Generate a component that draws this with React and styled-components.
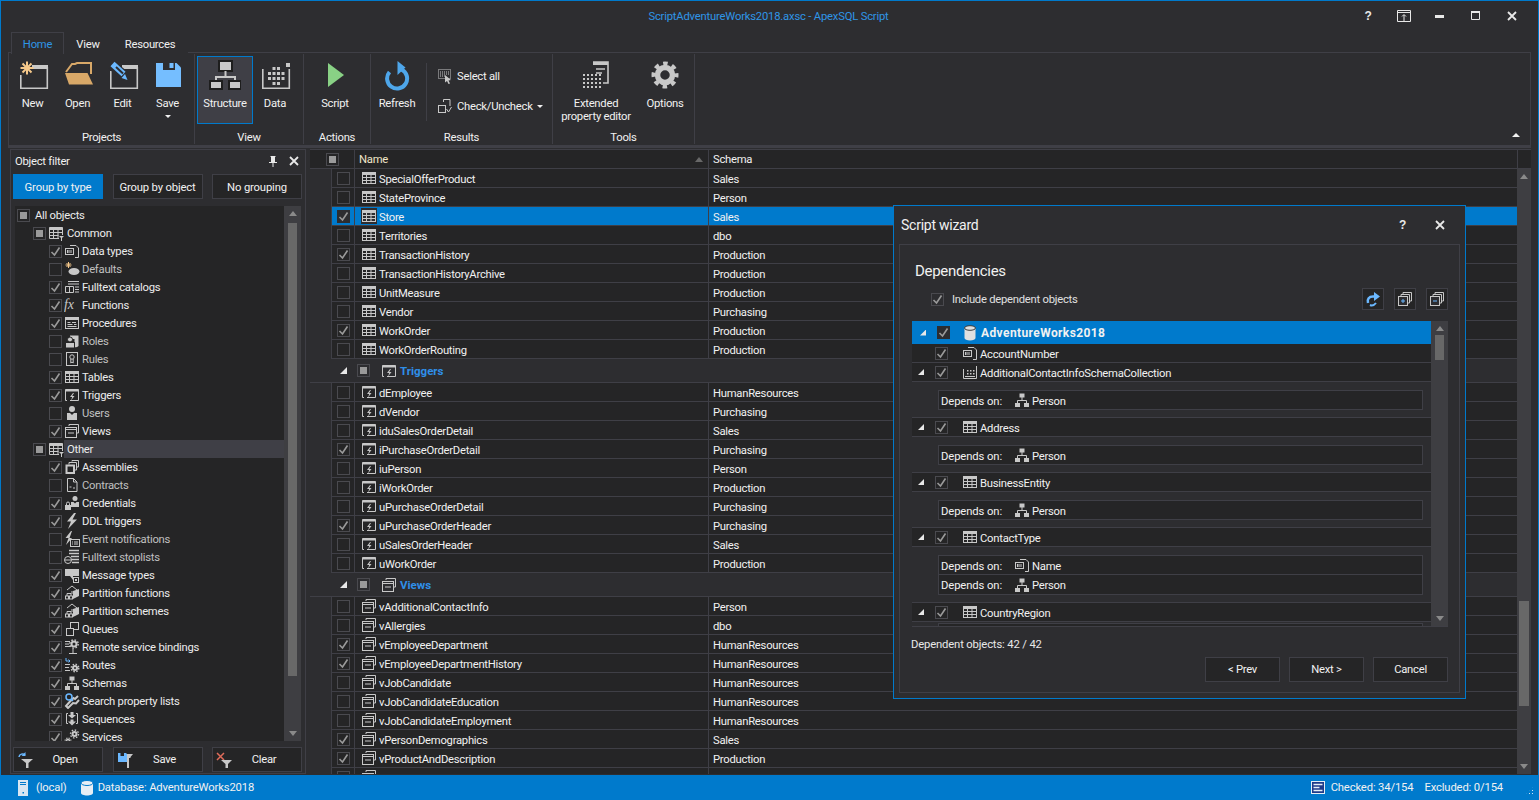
import React from "react";
import styled, { createGlobalStyle } from "styled-components";

const G = "#c8c8c8";
const ORANGE = "#f5c88a";
const BLUE = "#6bb8ff";

// list icons, all drawn on a 16px box
const icons = {
  table: (
    <>
      <rect x="1.5" y="2.5" width="13" height="11" stroke={G} fill="none" />
      <rect x="1.5" y="2.5" width="13" height="2.5" fill={G} />
      <path d="M1.5 7.5h13M1.5 10.5h13M5.5 5v8.5M10 5v8.5" stroke={G} fill="none" />
    </>
  ),
  tableFilter: (
    <>
      <path d="M11 13.5H1.5v-11h13V10" stroke={G} fill="none" />
      <rect x="1.5" y="2.5" width="13" height="2.5" fill={G} />
      <path d="M1.5 7.5h13M1.5 10.5h9M5.5 5v8.5M10 5v8.5" stroke={G} fill="none" />
      <path d="M11 11h5l-2 2v3h-1v-3z" fill={G} />
    </>
  ),
  datatype: (
    <>
      <path d="M6 2.5h6l2.5 2.5v9.5H11" stroke={G} fill="none" />
      <rect x="1.5" y="5.5" width="8" height="6" stroke={G} fill="#252526" />
      <path d="M3.5 7v3M5 7v3M7 7v3" stroke={G} fill="none" />
    </>
  ),
  defaults: (
    <>
      <ellipse cx="10" cy="10.5" rx="5.5" ry="3.5" fill={G} />
      <path d="M4.5 1v6M1.5 4h6M2.5 2l4 4M6.5 2l-4 4" stroke={ORANGE} fill="none" />
    </>
  ),
  fulltext: (
    <>
      <path d="M4 2.5h11M4 5h11M11 8h4M11 10.5h4M11 13h4" stroke={G} fill="none" />
      <path d="M1.5 7.5h8v6h-8zM5.5 7.5v6" stroke={G} fill="none" />
    </>
  ),
  fx: (
    <text x="0" y="12" fontFamily="Liberation Serif, serif" fontStyle="italic" fontSize="14" fill={G}>
      fx
    </text>
  ),
  procedure: (
    <>
      <rect x="1.5" y="2.5" width="13" height="11" stroke={G} fill="none" />
      <rect x="1.5" y="2.5" width="13" height="2.5" fill={G} />
      <path d="M3.5 7.5h3M8 7.5h4M3.5 9.5h5M10 9.5h2.5M3.5 11.5h9" stroke={G} fill="none" />
    </>
  ),
  roles: (
    <>
      <path d="M6 2.5h8.5V13q-2 2-4 1V6H6z" fill={G} />
      <circle cx="6" cy="6.5" r="2.5" fill={G} stroke="#252526" />
      <rect x="1.5" y="9.5" width="9" height="5.5" fill={G} stroke="#252526" />
    </>
  ),
  rules: (
    <>
      <rect x="2.5" y="1.5" width="11" height="13" stroke={G} fill="none" />
      <circle cx="8" cy="6" r="2.2" stroke={G} fill="none" />
      <path d="M6.8 8v4l1.2-1 1.2 1V8" stroke={G} fill="none" />
    </>
  ),
  trigger: (
    <>
      <path d="M1.5 2.5h13v11H6M1.5 2.5v11H3" stroke={G} fill="none" />
      <rect x="1.5" y="2.5" width="13" height="2" fill={G} />
      <path d="M9 6l-3 4h2.2L7 13.5l3.5-4.5H8.2L10 6z" fill={G} />
    </>
  ),
  user: (
    <>
      <circle cx="8" cy="4" r="3" fill={G} />
      <path d="M3 8h3l2 2 2-2h3v7H3z" fill={G} />
    </>
  ),
  views: (
    <>
      <path d="M5 3V1.5h9.5V10H13" stroke={G} fill="none" />
      <rect x="1.5" y="4.5" width="11" height="10" stroke={G} fill="none" />
      <path d="M1.5 6.5h11M4 10h6" stroke={G} fill="none" />
    </>
  ),
  assembly: (
    <>
      <path d="M8 2.5V1.5h6.5V8H13" stroke={G} fill="none" />
      <path d="M5 5.5V3.5h7.5V11H11" stroke={G} fill="none" />
      <rect x="2.5" y="6.5" width="7.5" height="7.5" stroke={G} strokeWidth="2" fill="none" />
    </>
  ),
  contract: (
    <>
      <path d="M3.5 1.5h6l3.5 3.5v9.5H3.5z" stroke={G} fill="none" />
      <path d="M9.5 1.5V5H13M5.5 10h2M9 11h2" stroke={G} fill="none" />
    </>
  ),
  credential: (
    <>
      <circle cx="11" cy="3.5" r="2.5" fill={G} />
      <path d="M7 7h2.5l1.5 1.5L12.5 7H15v5H7z" fill={G} />
      <rect x="1" y="10" width="6" height="5" fill={G} />
      <path d="M2.5 10V8.5a1.5 1.5 0 0 1 3 0V10" stroke={G} fill="none" />
    </>
  ),
  ddl: <path d="M10 0L3 8.5h4L4 16l9-9.5H8.5L12 0z" fill={G} />,
  event: (
    <>
      <path d="M7 0L1.5 7h3L2 14l6-7H5.5L8 0z" fill={G} />
      <rect x="6.5" y="8.5" width="9" height="7" stroke={G} fill="#252526" />
      <path d="M8 11h1M10 11h4M8 13h1M10 13h4" stroke={G} fill="none" />
    </>
  ),
  stoplist: (
    <>
      <path d="M5 1.5h10M5 4.5h10M7 7.5h8M7 10.5h8M8 13.5h7" stroke={G} strokeWidth="1.4" fill="none" />
      <circle cx="4" cy="11" r="3.5" stroke={G} fill="#252526" />
      <path d="M1 11h6" stroke={G} fill="none" />
    </>
  ),
  message: (
    <>
      <path d="M1 2h14v7H9v4L6 9H1z" fill={G} />
      <rect x="9.5" y="10.5" width="5" height="5" stroke={G} fill="#252526" />
      <rect x="11" y="12" width="2" height="2" fill={G} />
    </>
  ),
  partition: (
    <>
      <path d="M3 5l5-4 5 4M8 9v-3" stroke={G} fill="none" />
      <path d="M9 6l6-2v7l-6 3z" fill={G} />
      <rect x="1.5" y="11" width="3" height="3" stroke={G} fill="none" />
      <rect x="5.5" y="11" width="3" height="3" stroke={G} fill="none" />
      <path d="M3 11V8.5h4V11" stroke={G} fill="none" />
    </>
  ),
  queue: (
    <>
      <rect x="6.5" y="1.5" width="8" height="7" stroke={G} fill="none" />
      <rect x="2.5" y="7.5" width="7" height="7" stroke={G} fill="#252526" />
    </>
  ),
  remote: (
    <>
      <path d="M1 2.5h5M1 5h4M1 7.5h5M9 10v4M5 14.5h8" stroke={G} fill="none" />
      <circle cx="10" cy="5" r="2.5" stroke={G} strokeWidth="2" fill="none" />
      <circle cx="10" cy="5" r="4.2" stroke={G} strokeWidth="1.4" strokeDasharray="1.6 1.7" fill="none" />
    </>
  ),
  route: (
    <>
      <path d="M2 1v3h4M4.5 2.5L6 4 4.5 5.5" stroke={BLUE} fill="none" />
      <path d="M1 7.5h5M1 10.5h4M1 13.5h5" stroke={G} fill="none" />
      <circle cx="11" cy="11" r="2" stroke={G} strokeWidth="2" fill="none" />
      <circle cx="11" cy="11" r="3.8" stroke={G} strokeWidth="1.4" strokeDasharray="1.5 1.5" fill="none" />
    </>
  ),
  schema: (
    <>
      <rect x="5.5" y="1.5" width="5" height="4" fill={G} />
      <rect x="1" y="11" width="5" height="4" fill={G} />
      <rect x="10" y="11" width="5" height="4" fill={G} />
      <path d="M8 5v3.5M3.5 11V8.5h9V11" stroke={G} fill="none" />
    </>
  ),
  search: (
    <>
      <path d="M14 3l-3 3-1.5-1L6 8.5 2 13l2 2 5-5 3 .5 3-3.5" stroke={G} strokeWidth="2" fill="none" />
      <circle cx="5" cy="4" r="3" stroke={BLUE} strokeWidth="1.5" fill="none" />
      <path d="M7 6l2 2" stroke={BLUE} strokeWidth="1.5" />
    </>
  ),
  sequence: (
    <>
      <path d="M4 2.5H2.5v10H4M12 2.5h1.5v10H12" stroke={G} fill="none" />
      <path d="M6.5 1h3v3H12L8 7.5 4 4h2.5zM6.5 8.5h3v2H12l-4 4-4-4h2.5z" fill={G} />
    </>
  ),
  service: (
    <>
      <circle cx="10.5" cy="5" r="2" stroke={G} strokeWidth="2" fill="none" />
      <circle cx="10.5" cy="5" r="4" stroke={G} strokeWidth="1.4" strokeDasharray="1.5 1.6" fill="none" />
      <circle cx="4" cy="12" r="1.5" stroke={G} strokeWidth="1.5" fill="none" />
      <circle cx="4" cy="12" r="3" stroke={G} strokeWidth="1.2" strokeDasharray="1.2 1.2" fill="none" />
    </>
  ),
  database: (
    <>
      <path d="M2.5 3v10c0 1.5 2.5 2.5 5.5 2.5s5.500-1 5.500-2.500V3z" fill="#e0e0e0" />
      <ellipse cx="8" cy="3" rx="5.5" ry="2.3" fill="#e0e0e0" stroke="#3a3a3a" />
    </>
  ),
  xsd: (
    <>
      <path d="M1.5 5v9.5h13V2" stroke={G} fill="none" />
      <path d="M5 6h1.500v1.500H5zM8 6h1.500v1.500H8zM11 6h1.500v1.500H11zM5 9h1.500v1.500H5zM8 9h1.500v1.500H8zM11 9h1.500v1.500H11zM3 12h10v1H3z" fill={G} />
    </>
  ),
  selectAll: (
    <>
      <path d="M1.5 1.5h12v9h-12z" stroke={G} strokeDasharray="1 1" fill="none" />
      <path d="M3 4h9M3 6h9M3 8h5" stroke={G} strokeDasharray="1 1" fill="none" />
      <path d="M8 7l6 5-2.5.5L13 15.5l-1.5.5-1.5-3-2 1.5z" fill={G} />
    </>
  ),
  checkToggle: (
    <>
      <path d="M6.5 4V1.5H13V8" stroke={G} fill="none" />
      <rect x="1.5" y="7.5" width="7" height="7" stroke={G} fill="none" />
      <path d="M9.5 11l2 3 3-5" stroke={G} fill="none" />
    </>
  ),
  openFilter: (
    <>
      <path d="M2 5a3.5 3.5 0 0 1 6-2" stroke={BLUE} strokeWidth="1.5" fill="none" />
      <path d="M8.5 0v4h-4z" fill={BLUE} />
      <path d="M4 7h12l-4.5 4v5h-2.5v-5z" fill={G} />
    </>
  ),
  saveFilter: (
    <>
      <path d="M1 1h8l1 1v8H1z" fill={BLUE} />
      <rect x="3.5" y="1" width="3.5" height="3" fill="#252526" />
      <path d="M10 2h6l-2.5 3v1H12v10h-2z" fill={G} />
    </>
  ),
  clearFilter: (
    <>
      <path d="M1 1l7 7M8 1L1 8" stroke="#e06c5a" strokeWidth="1.5" />
      <path d="M5 8h11l-4 4v4H9.5v-4z" fill={G} />
    </>
  ),
  refreshSmall: (
    <>
      <path d="M3 12c-1-4 1-6.5 5-6.5h3" stroke={BLUE} strokeWidth="2.5" fill="none" />
      <path d="M9 1l6 4.5L9 10z" fill={BLUE} />
      <path d="M5 14c2 1 4 .5 6-2" stroke={BLUE} strokeWidth="2" fill="none" />
    </>
  ),
  expandAll: (
    <>
      <path d="M6 3V1.5h8.5V10H13M4 5V3.5h8.5V12H11" stroke={G} fill="none" />
      <rect x="1.5" y="5.5" width="9" height="9" stroke={G} fill="#2d2d30" />
      <path d="M4 10h4M6 8v4" stroke={BLUE} />
    </>
  ),
  collapseAll: (
    <>
      <path d="M6 3V1.5h8.5V10H13M4 5V3.5h8.5V12H11" stroke={G} fill="none" />
      <rect x="1.5" y="5.5" width="9" height="9" stroke={G} fill="#2d2d30" />
      <path d="M4 10h4" stroke={BLUE} />
    </>
  ),
  server: (
    <>
      <rect x="3" y="0" width="10" height="16" fill="#d8e6f2" />
      <path d="M5 2.5h6M5 4.5h6" stroke="#007acc" />
      <rect x="7.5" y="12" width="1.5" height="1.5" fill="#007acc" />
    </>
  ),
  dbStatus: (
    <>
      <path d="M2 3v10c0 1.5 2.7 2.5 6 2.5s6-1 6-2.5V3z" fill="#e6eef5" />
      <ellipse cx="8" cy="3" rx="6" ry="2.5" fill="#e6eef5" stroke="#007acc" />
    </>
  ),
  report: (
    <>
      <rect x="0.5" y="1.5" width="13" height="12" fill="#1e3a8a" stroke="#e6eef5" />
      <path d="M2.5 4.5h9M2.5 7.5h6M2.5 10.5h9" stroke="#e6eef5" strokeWidth="1.5" />
    </>
  ),
};

// ribbon icons, drawn on a 32px box
const ribbonIcons = {
  new: (
    <>
      <rect x="15" y="6" width="16" height="4" fill={G} />
      <path d="M3.8 16v13.2h26.5V8" stroke={G} strokeWidth="1.6" fill="none" />
      <path d="M10 2.5v13M3.5 9h13M5.5 4.5l9 9M14.5 4.5l-9 9" stroke={ORANGE} strokeWidth="2" />
    </>
  ),
  open: (
    <>
      <path d="M4 13L10 5h3l2-1h14v11" stroke="#d8a868" strokeWidth="2" fill="none" />
      <path d="M3 14h22.5L31 25.5H7z" fill="#d8a868" />
    </>
  ),
  edit: (
    <>
      <rect x="15" y="6" width="16" height="4" fill={G} />
      <path d="M3.8 12v17.2h26.5V8" stroke={G} strokeWidth="1.6" fill="none" />
      <path d="M5 6l14 12" stroke="#2d2d30" strokeWidth="10" />
      <path d="M5.5 5l11 10" stroke={BLUE} strokeWidth="6" />
      <path d="M9 8l7 6.5" stroke="#2d2d30" strokeWidth="2" />
      <path d="M14.5 19l6 2-2.5-6z" fill={BLUE} />
    </>
  ),
  save: (
    <>
      <path d="M4 4h20.5L29 8.5V28H4z" fill="#75beff" />
      <path d="M11 4h12v7H11z" fill="#2d2d30" />
      <rect x="17.5" y="4" width="4" height="5" fill="#75beff" />
    </>
  ),
  structure: (
    <>
      <rect x="10" y="2" width="13" height="10" fill={G} stroke="#1e1e1e" strokeWidth="2" />
      <path d="M16.5 12v7M7 24v-6h19v6" stroke={G} strokeWidth="2" fill="none" />
      <rect x="1" y="22" width="12" height="8" fill={G} stroke="#1e1e1e" strokeWidth="2" />
      <rect x="20" y="22" width="12" height="8" fill={G} stroke="#1e1e1e" strokeWidth="2" />
    </>
  ),
  data: (
    <>
      <path d="M3.8 10v19.2h26.5V10" stroke={G} strokeWidth="1.6" fill="none" />
      <rect x="27" y="4" width="4" height="4" fill={G} />
      <path d="M13.5 8h3v3h-3zM18 8h3v3h-3zM9 13h3v3H9zM13.5 13h3v3h-3zM18 13h3v3h-3zM22.5 13h3v3h-3zM9 18h3v3H9zM13.5 18h3v3h-3zM18 18h3v3h-3zM22.5 18h3v3h-3zM13.5 23h3v3h-3zM18 23h3v3h-3z" fill={G} />
    </>
  ),
  script: <path d="M9 4l16 12L9 28z" fill="#89d185" />,
  refresh: (
    <>
      <path d="M20.5 10.500a10 10 0 1 1-12 2.500" stroke="#4ea6ea" strokeWidth="4" fill="none" />
      <path d="M16.5 2l8 6.5-8 7.5z" fill="#4ea6ea" />
    </>
  ),
  extended: (
    <>
      <path d="M13 3h15v21h-5" stroke={G} strokeWidth="1.6" fill="none" />
      <rect x="13" y="3" width="15" height="3" fill={G} />
      <path d="M16 10h9M16 14h6" stroke={G} strokeWidth="1.6" />
      <path d="M3 16h20M3 20h20M3 24h20M3 28h20" stroke={G} strokeWidth="2" strokeDasharray="2 2" />
    </>
  ),
  options: (
    <>
      <circle cx="16" cy="16" r="11.5" stroke={G} strokeWidth="4" strokeDasharray="4.5 4.53" strokeDashoffset="2.2" fill="none" />
      <circle cx="16" cy="16" r="7.5" stroke={G} strokeWidth="5.5" fill="none" />
    </>
  ),
};

const Icon = ({ name, size = 16 }) => (
  <IconSvg width={size} height={size} viewBox="0 0 16 16">
    {icons[name]}
  </IconSvg>
);

const RibbonIcon = ({ name }) => (
  <IconSvg width="32" height="32" viewBox="0 0 32 32">
    {ribbonIcons[name]}
  </IconSvg>
);

const Check = ({ state, dark }) => (
  <CheckBox $dark={dark}>
    {state === "on" && (
      <svg width="11" height="11" viewBox="0 0 11 11">
        <path d="M1.5 6l3 3 5-7.5" stroke="#9a9a9a" strokeWidth="1.6" fill="none" />
      </svg>
    )}
    {state === "mixed" && <Mixed />}
  </CheckBox>
);

const filterCommon = [
  ["Data types", "datatype", 1],
  ["Defaults", "defaults", 0],
  ["Fulltext catalogs", "fulltext", 1],
  ["Functions", "fx", 1],
  ["Procedures", "procedure", 1],
  ["Roles", "roles", 0],
  ["Rules", "rules", 0],
  ["Tables", "table", 1],
  ["Triggers", "trigger", 1],
  ["Users", "user", 0],
  ["Views", "views", 1],
];

const filterOther = [
  ["Assemblies", "assembly", 1],
  ["Contracts", "contract", 0],
  ["Credentials", "credential", 1],
  ["DDL triggers", "ddl", 1],
  ["Event notifications", "event", 0],
  ["Fulltext stoplists", "stoplist", 0],
  ["Message types", "message", 1],
  ["Partition functions", "partition", 1],
  ["Partition schemes", "partition", 1],
  ["Queues", "queue", 1],
  ["Remote service bindings", "remote", 1],
  ["Routes", "route", 1],
  ["Schemas", "schema", 1],
  ["Search property lists", "search", 1],
  ["Sequences", "sequence", 1],
  ["Services", "service", 1],
];

const tableRows = [
  ["SpecialOfferProduct", "Sales", 0],
  ["StateProvince", "Person", 0],
  ["Store", "Sales", 1, true],
  ["Territories", "dbo", 0],
  ["TransactionHistory", "Production", 1],
  ["TransactionHistoryArchive", "Production", 0],
  ["UnitMeasure", "Production", 0],
  ["Vendor", "Purchasing", 0],
  ["WorkOrder", "Production", 1],
  ["WorkOrderRouting", "Production", 0],
];

const triggerRows = [
  ["dEmployee", "HumanResources", 0],
  ["dVendor", "Purchasing", 0],
  ["iduSalesOrderDetail", "Sales", 0],
  ["iPurchaseOrderDetail", "Purchasing", 1],
  ["iuPerson", "Person", 0],
  ["iWorkOrder", "Production", 0],
  ["uPurchaseOrderDetail", "Purchasing", 0],
  ["uPurchaseOrderHeader", "Purchasing", 1],
  ["uSalesOrderHeader", "Sales", 0],
  ["uWorkOrder", "Production", 0],
];

const viewRows = [
  ["vAdditionalContactInfo", "Person", 0],
  ["vAllergies", "dbo", 0],
  ["vEmployeeDepartment", "HumanResources", 1],
  ["vEmployeeDepartmentHistory", "HumanResources", 1],
  ["vJobCandidate", "HumanResources", 0],
  ["vJobCandidateEducation", "HumanResources", 0],
  ["vJobCandidateEmployment", "HumanResources", 0],
  ["vPersonDemographics", "Sales", 1],
  ["vProductAndDescription", "Production", 1],
  ["vProductModelCatalogDescription", "Production", 0],
];

const dependencies = [
  { name: "AccountNumber", icon: "datatype" },
  { name: "AdditionalContactInfoSchemaCollection", icon: "xsd", open: true, on: [["schema", "Person"]] },
  { name: "Address", icon: "table", open: true, on: [["schema", "Person"]] },
  { name: "BusinessEntity", icon: "table", open: true, on: [["schema", "Person"]] },
  { name: "ContactType", icon: "table", open: true, on: [["datatype", "Name"], ["schema", "Person"]] },
  { name: "CountryRegion", icon: "table", open: true, tight: true, on: [["schema", "Person"]] },
];

function GridRows({ rows, icon }) {
  return rows.map(([name, schema, checked, selected]) => (
    <DataRow key={name}>
      <Gutter />
      <CheckCell $selected={selected}>
        <Check state={checked ? "on" : "off"} dark={selected} />
      </CheckCell>
      <NameCell $selected={selected}>
        <NameIcon $selected={selected}>
          <Icon name={icon} />
        </NameIcon>
        <CellText>{name}</CellText>
      </NameCell>
      <SchemaCell $selected={selected}>
        <CellText>{schema}</CellText>
      </SchemaCell>
    </DataRow>
  ));
}

function GroupHeader({ title, icon }) {
  return (
    <GroupRow>
      <Expander />
      <Check state="mixed" />
      <GroupIcon>
        <Icon name={icon} />
      </GroupIcon>
      <GroupTitle>{title}</GroupTitle>
    </GroupRow>
  );
}

function FilterItems({ items }) {
  return items.map(([label, icon, checked]) => (
    <TreeRow key={label} $indent={34}>
      <Check state={checked ? "on" : "off"} />
      <Icon name={icon} />
      <TreeLabel $dim={!checked}>{label}</TreeLabel>
    </TreeRow>
  ));
}

function RibbonGroup({ label, children, $width, $pad }) {
  return (
    <GroupBox $width={$width}>
      <GroupItems $pad={$pad}>{children}</GroupItems>
      <GroupLabel>{label}</GroupLabel>
    </GroupBox>
  );
}

export default function App() {
  return (
    <>
      <GlobalStyle />
      <Window>
        <TitleBar>
          <AppTitle>ScriptAdventureWorks2018.axsc - ApexSQL Script</AppTitle>
          <WindowControls>
            <WinButton>
              <HelpMark>?</HelpMark>
            </WinButton>
            <WinButton>
              <svg width="14" height="12" viewBox="0 0 14 12">
                <path d="M.5.5h13v11H.5zM.5 2.5h13M7 11V5M5 6.5L7 4.5l2 2" stroke="#e8e8e8" fill="none" />
              </svg>
            </WinButton>
            <WinButton>
              <svg width="10" height="4" viewBox="0 0 10 4">
                <rect width="9" height="3" y="1" fill="#e8e8e8" />
              </svg>
            </WinButton>
            <WinButton>
              <svg width="10" height="10" viewBox="0 0 10 10">
                <path d="M.5.5h8v8h-8z" stroke="#e8e8e8" fill="none" />
                <rect width="9" height="2" fill="#e8e8e8" />
              </svg>
            </WinButton>
            <WinButton>
              <svg width="10" height="10" viewBox="0 0 10 10">
                <path d="M1 1l8 8M9 1l-8 8" stroke="#e8e8e8" strokeWidth="1.8" />
              </svg>
            </WinButton>
          </WindowControls>
        </TitleBar>

        <Tabs>
          <Tab $active>Home</Tab>
          <Tab>View</Tab>
          <Tab $wide>Resources</Tab>
        </Tabs>

        <Ribbon>
          <RibbonGroup $width={186} label="Projects">
            <RibbonButton $width={45}>
              <RibbonIcon name="new" />
              New
            </RibbonButton>
            <RibbonButton $width={45}>
              <RibbonIcon name="open" />
              Open
            </RibbonButton>
            <RibbonButton $width={45}>
              <RibbonIcon name="edit" />
              Edit
            </RibbonButton>
            <RibbonButton $width={45}>
              <RibbonIcon name="save" />
              Save
              <Caret />
            </RibbonButton>
          </RibbonGroup>
          <RibbonGroup $width={109} $pad={2} label="View">
            <RibbonButton $width={56} $active>
              <RibbonIcon name="structure" />
              Structure
            </RibbonButton>
            <RibbonButton $width={44}>
              <RibbonIcon name="data" />
              Data
            </RibbonButton>
          </RibbonGroup>
          <RibbonGroup $width={67} $pad={11} label="Actions">
            <RibbonButton $width={40}>
              <RibbonIcon name="script" />
              Script
            </RibbonButton>
          </RibbonGroup>
          <RibbonGroup $width={182} $pad={7} label="Results">
            <RibbonButton $width={38}>
              <RibbonIcon name="refresh" />
              Refresh
            </RibbonButton>
            <InnerDivider />
            <SmallStack>
              <SmallButton>
                <Icon name="selectAll" />
                Select all
              </SmallButton>
              <SmallButton>
                <Icon name="checkToggle" />
                Check/Uncheck
                <InlineCaret />
              </SmallButton>
            </SmallStack>
          </RibbonGroup>
          <RibbonGroup $width={142} $pad={5} label="Tools">
            <RibbonButton $width={76}>
              <RibbonIcon name="extended" />
              Extended
              <br />
              property editor
            </RibbonButton>
            <RibbonButton $width={40} $gapLeft={11}>
              <RibbonIcon name="options" />
              Options
            </RibbonButton>
          </RibbonGroup>
          <CollapseRibbon />
        </Ribbon>

        <Body>
          <FilterPanel>
            <PanelHead>
              Object filter
              <PanelTools>
                <svg width="10" height="11" viewBox="0 0 10 11">
                  <path d="M2.5 0h5v1h-.5v5H9v1H5.5v4h-1V7H1V6h2V1h-.5z" fill="#e8e8e8" />
                </svg>
                <svg width="10" height="10" viewBox="0 0 10 10">
                  <path d="M1 1l8 8M9 1l-8 8" stroke="#e8e8e8" strokeWidth="1.8" />
                </svg>
              </PanelTools>
            </PanelHead>
            <ButtonRow>
              <FilterButton $active>Group by type</FilterButton>
              <FilterButton>Group by object</FilterButton>
              <FilterButton>No grouping</FilterButton>
            </ButtonRow>
            <TreeBox>
              <TreeRows>
                <TreeRow $indent={2}>
                  <Check state="mixed" />
                  <TreeLabel $root>All objects</TreeLabel>
                </TreeRow>
                <TreeRow $indent={18}>
                  <Check state="mixed" />
                  <Icon name="tableFilter" />
                  <TreeLabel $branch>Common</TreeLabel>
                </TreeRow>
                <FilterItems items={filterCommon} />
                <TreeRow $indent={18}>
                  <Check state="mixed" />
                  <Icon name="tableFilter" />
                  <TreeLabel $branch $hover>
                    Other
                  </TreeLabel>
                </TreeRow>
                <FilterItems items={filterOther} />
              </TreeRows>
              <ScrollTrack $width={17}>
                <ScrollArrow />
                <ScrollThumb $top={7} $height={453} $width={9} />
                <ScrollArrow $down />
              </ScrollTrack>
            </TreeBox>
            <ButtonRow $bottom>
              <FooterButton>
                <Icon name="openFilter" />
                <span>Open</span>
              </FooterButton>
              <FooterButton>
                <Icon name="saveFilter" />
                <span>Save</span>
              </FooterButton>
              <FooterButton>
                <Icon name="clearFilter" />
                <span>Clear</span>
              </FooterButton>
            </ButtonRow>
          </FilterPanel>

          <GridPanel>
            <GridHead>
              <HeadCheck>
                <Check state="mixed" />
              </HeadCheck>
              <HeadName>
                Name
                <SortMark />
              </HeadName>
              <HeadSchema>Schema</HeadSchema>
              <HeadCorner />
            </GridHead>
            <GridMain>
              <GridBody>
                <GridRows rows={tableRows} icon="table" />
                <GroupHeader title="Triggers" icon="trigger" />
                <GridRows rows={triggerRows} icon="trigger" />
                <GroupHeader title="Views" icon="views" />
                <GridRows rows={viewRows} icon="views" />
              </GridBody>
              <ScrollTrack $width={14}>
                <ScrollArrow />
                <ScrollThumb $top={422} $height={105} $width={10} />
                <ScrollArrow $down />
              </ScrollTrack>
            </GridMain>
          </GridPanel>
        </Body>

        <StatusBar>
          <Icon name="server" />
          <StatusText $gap={5}>(local)</StatusText>
          <StatusItem>
            <Icon name="dbStatus" />
            <StatusText $gap={3}>Database: AdventureWorks2018</StatusText>
          </StatusItem>
          <StatusRight>
            <Icon name="report" />
            <StatusText $gap={4}>Checked: 34/154</StatusText>
            <StatusText $gap={11}>Excluded: 0/154</StatusText>
            <Grip />
          </StatusRight>
        </StatusBar>

        <Dialog>
          <DialogHead>
            <DialogTitle>Script wizard</DialogTitle>
            <DialogTools>
              <HelpMark>?</HelpMark>
              <svg width="10" height="10" viewBox="0 0 10 10">
                <path d="M1 1l8 8M9 1l-8 8" stroke="#e8e8e8" strokeWidth="1.8" />
              </svg>
            </DialogTools>
          </DialogHead>
          <DialogBody>
            <Heading>Dependencies</Heading>
            <IncludeRow>
              <Check state="on" />
              <IncludeLabel>Include dependent objects</IncludeLabel>
              <ToolGroup>
                <ToolButton>
                  <Icon name="refreshSmall" />
                </ToolButton>
                <ToolButton>
                  <Icon name="expandAll" />
                </ToolButton>
                <ToolButton>
                  <Icon name="collapseAll" />
                </ToolButton>
              </ToolGroup>
            </IncludeRow>
            <DepList>
              <DepRows>
                <DepRoot>
                  <DepExpander />
                  <Check state="on" dark />
                  <DepRootIcon>
                    <Icon name="database" />
                  </DepRootIcon>
                  AdventureWorks2018
                </DepRoot>
                {dependencies.map((dep) => (
                  <React.Fragment key={dep.name}>
                    <DepRow>
                      <DepExpander $hidden={!dep.open} />
                      <Check state="on" />
                      <DepIcon>
                        <Icon name={dep.icon} />
                      </DepIcon>
                      <CellText>{dep.name}</CellText>
                    </DepRow>
                    {dep.on && (
                      <DepDetail $tight={dep.tight}>
                        {dep.on.map(([icon, target]) => (
                          <DependsLine key={target}>
                            <DependsLabel>Depends on:</DependsLabel>
                            <Icon name={icon} />
                            <DependsTarget>{target}</DependsTarget>
                          </DependsLine>
                        ))}
                      </DepDetail>
                    )}
                  </React.Fragment>
                ))}
              </DepRows>
              <ScrollTrack $width={17}>
                <ScrollArrow />
                <ScrollThumb $top={4} $height={25} $width={9} />
                <ScrollArrow $down />
              </ScrollTrack>
            </DepList>
            <DepCount>Dependent objects: 42 / 42</DepCount>
            <WizardButtons>
              <WizardButton>&lt; Prev</WizardButton>
              <WizardButton>Next &gt;</WizardButton>
              <WizardButton>Cancel</WizardButton>
            </WizardButtons>
          </DialogBody>
        </Dialog>
      </Window>
    </>
  );
}

const GlobalStyle = createGlobalStyle`
  html, body {
    margin: 0;
    height: 800px;
    overflow: hidden;
    background: #2d2d30;
  }
  * {
    box-sizing: border-box;
  }
  body {
    font-family: Roboto, "Liberation Sans", sans-serif;
    font-size: 11.25px;
    letter-spacing: -0.25px;
    color: #f1f1f1;
  }
`;

const IconSvg = styled.svg`
  flex: none;
  display: block;
`;

const Window = styled.div`
  position: relative;
  display: flex;
  flex-direction: column;
  width: 1539px;
  height: 800px;
  border: 1px solid #007acc;
  border-bottom: 0;
  background: #2d2d30;
`;

const TitleBar = styled.header`
  position: relative;
  display: flex;
  align-items: center;
  justify-content: center;
  flex: none;
  height: 31px;
`;

const AppTitle = styled.div`
  color: #2f95e6;
  margin-left: -2px;
  letter-spacing: -0.2px;
`;

const WindowControls = styled.div`
  position: absolute;
  right: 8px;
  top: 0;
  display: flex;
  height: 30px;
`;

const WinButton = styled.div`
  display: flex;
  align-items: center;
  justify-content: center;
  width: 36px;
`;

const HelpMark = styled.span`
  font-family: "Liberation Sans", sans-serif;
  font-weight: 700;
  font-size: 12px;
  color: #e8e8e8;
`;

const Tabs = styled.nav`
  display: flex;
  flex: none;
  height: 21px;
  padding-left: 10px;
  margin-bottom: -1px;
  position: relative;
  z-index: 1;
`;

const Tab = styled.div`
  display: flex;
  align-items: center;
  justify-content: center;
  width: ${(p) => (p.$active ? "53px" : p.$wide ? "76px" : "48px")};
  height: 22px;
  padding-top: 1px;
  border: 1px solid ${(p) => (p.$active ? "#3f3f46" : "transparent")};
  border-bottom: 0;
  background: #2d2d30;
  color: ${(p) => (p.$active ? "#2f95e6" : "#f1f1f1")};
`;

const Ribbon = styled.section`
  position: relative;
  display: flex;
  flex: none;
  height: 96px;
  margin: 0 7px;
  border: 1px solid #3f3f46;
  border-bottom-width: 3px;
`;

const GroupBox = styled.div`
  display: flex;
  flex-direction: column;
  flex: none;
  width: ${(p) => p.$width}px;
  margin: 1px 0;
  border-right: 1px solid #3f3f46;
`;

const GroupItems = styled.div`
  display: flex;
  flex: 1;
  padding: 2px 0 0 ${(p) => p.$pad ?? 1}px;
`;

const GroupLabel = styled.div`
  flex: none;
  height: 18px;
  line-height: 24px;
  text-align: center;
`;

const RibbonButton = styled.div`
  display: flex;
  flex-direction: column;
  align-items: center;
  flex: none;
  width: ${(p) => p.$width}px;
  height: 68px;
  margin-left: ${(p) => p.$gapLeft ?? 0}px;
  padding-top: 2px;
  line-height: 13px;
  text-align: center;
  white-space: nowrap;
  border: 1px solid ${(p) => (p.$active ? "#007acc" : "transparent")};
  background: ${(p) => (p.$active ? "#3f3f46" : "transparent")};

  svg {
    margin-bottom: 6px;
  }
`;

const Caret = styled.span`
  width: 0;
  height: 0;
  margin-top: 5px;
  border: 3px solid transparent;
  border-top: 3.5px solid #f1f1f1;
  border-bottom: 0;
`;

const InlineCaret = styled(Caret)`
  margin: 1px 0 0 0;
`;

const InnerDivider = styled.div`
  flex: none;
  width: 1px;
  height: 58px;
  margin: 7px 10px 0 10px;
  background: #3f3f46;
`;

const SmallStack = styled.div`
  display: flex;
  flex-direction: column;
  gap: 14px;
  padding-top: 12px;
`;

const SmallButton = styled.div`
  display: flex;
  align-items: center;
  gap: 4px;
  height: 16px;
  white-space: nowrap;
`;

const CollapseRibbon = styled.span`
  position: absolute;
  right: 10px;
  bottom: 8px;
  width: 0;
  height: 0;
  border: 4.5px solid transparent;
  border-bottom: 4.5px solid #f1f1f1;
  border-top: 0;
`;

const Body = styled.main`
  display: flex;
  flex: 1;
  min-height: 0;
  gap: 4px;
  padding: 1px 7px 1px 9px;
  background: #2d2d30;
`;

const FilterPanel = styled.aside`
  display: flex;
  flex-direction: column;
  flex: none;
  width: 296px;
  padding: 0 3px;
  border: 1px solid #3f3f46;
`;

const PanelHead = styled.div`
  display: flex;
  align-items: center;
  justify-content: space-between;
  flex: none;
  height: 22px;
  padding: 0 0 0 1px;
`;

const PanelTools = styled.div`
  display: flex;
  align-items: center;
  gap: 11px;
  padding-right: 3px;
`;

const ButtonRow = styled.div`
  display: flex;
  justify-content: space-between;
  flex: none;
  margin-top: ${(p) => (p.$bottom ? "6px" : "2px")};
  margin-bottom: ${(p) => (p.$bottom ? "1px" : "7px")};
  margin-left: -1px;
`;

const FilterButton = styled.div`
  display: flex;
  align-items: center;
  justify-content: center;
  width: 90px;
  height: 25px;
  padding-top: 2px;
  letter-spacing: -0.15px;
  border: 1px solid ${(p) => (p.$active ? "#007acc" : "#3f3f46")};
  background: ${(p) => (p.$active ? "#007acc" : "#252526")};
`;

const FooterButton = styled.div`
  display: flex;
  align-items: center;
  width: 90px;
  height: 25px;
  padding-left: 3px;
  border: 1px solid #3f3f46;
  background: #252526;

  span {
    flex: 1;
    text-align: center;
    padding-right: 14px;
    padding-left: 9px;
  }
`;

const TreeBox = styled.div`
  display: flex;
  flex: 1;
  min-height: 0;
  margin: 0 1px;
  background: #252526;
`;

const TreeRows = styled.div`
  flex: 1;
  min-width: 0;
  overflow: hidden;
`;

const TreeRow = styled.div`
  display: flex;
  align-items: center;
  height: 18px;
  padding-left: ${(p) => p.$indent}px;

  > svg {
    margin-left: 2px;
  }
`;

const TreeLabel = styled.span`
  display: flex;
  align-items: center;
  flex: 1;
  height: 18px;
  padding-left: ${(p) => (p.$root ? 5 : p.$branch ? 3 : 2)}px;
  color: ${(p) => (p.$dim ? "#c0c0c0" : "#ececec")};
  background: ${(p) => (p.$hover ? "#3f3f46" : "transparent")};
  white-space: nowrap;
`;

const CheckBox = styled.span`
  display: inline-flex;
  align-items: center;
  justify-content: center;
  flex: none;
  width: 13px;
  height: 13px;
  border: 1px solid ${(p) => (p.$dark ? "#2d2d30" : "#4a4a4f")};
  background: ${(p) => (p.$dark ? "#2d2d30" : "transparent")};
`;

const Mixed = styled.span`
  width: 7px;
  height: 7px;
  background: #9a9a9a;
`;

const ScrollTrack = styled.div`
  display: flex;
  flex-direction: column;
  align-items: center;
  flex: none;
  width: ${(p) => p.$width}px;
  background: #3e3e42;
`;

const ScrollArrow = styled.span`
  flex: none;
  width: 0;
  height: 0;
  margin-top: ${(p) => (p.$down ? "auto" : "5px")};
  margin-bottom: ${(p) => (p.$down ? "5px" : "0")};
  border-left: 4.5px solid transparent;
  border-right: 4.5px solid transparent;
  border-top: ${(p) => (p.$down ? "5px solid #8a8a8a" : "0")};
  border-bottom: ${(p) => (p.$down ? "0" : "5px solid #8a8a8a")};
`;

const ScrollThumb = styled.span`
  flex: none;
  width: ${(p) => p.$width}px;
  height: ${(p) => p.$height}px;
  margin-top: ${(p) => p.$top}px;
  background: #686868;
`;

const GridPanel = styled.section`
  display: flex;
  flex-direction: column;
  flex: 1;
  min-width: 0;
`;

const GridHead = styled.div`
  display: flex;
  flex: none;
  height: 20px;
  background: #252526;
  border-top: 1px solid #3f3f46;
  border-bottom: 1px solid #3f3f46;
`;

const HeadCheck = styled.div`
  display: flex;
  align-items: center;
  flex: none;
  width: 45px;
  padding-left: 16px;
  border-right: 1px solid #3f3f46;
`;

const HeadName = styled.div`
  display: flex;
  align-items: center;
  justify-content: space-between;
  flex: none;
  width: 354px;
  padding: 0 5px 0 4px;
  border-right: 1px solid #3f3f46;
  color: #f0e6c8;
`;

const SortMark = styled.span`
  width: 0;
  height: 0;
  border-left: 4.5px solid transparent;
  border-right: 4.5px solid transparent;
  border-bottom: 5px solid #686868;
`;

const HeadSchema = styled.div`
  display: flex;
  align-items: center;
  flex: 1;
  padding: 0 0 0 4px;
`;

const HeadCorner = styled.div`
  flex: none;
  width: 14px;
  border-left: 1px solid #3f3f46;
`;

const GridMain = styled.div`
  display: flex;
  flex: 1;
  min-height: 0;
`;

const GridBody = styled.div`
  flex: 1;
  min-width: 0;
  overflow: hidden;
`;

const DataRow = styled.div`
  display: flex;
  height: 19px;
`;

const Gutter = styled.div`
  flex: none;
  width: 21px;
  background: #2d2d30;
`;

const CheckCell = styled.div`
  display: flex;
  align-items: center;
  flex: none;
  width: 24px;
  padding: 1px 0 0 5px;
  background: ${(p) => (p.$selected ? "#007acc" : "#252526")};
  border-left: 1px solid #3f3f46;
  border-right: 1px solid #3f3f46;
  border-bottom: 1px solid #3f3f46;
`;

const NameCell = styled.div`
  display: flex;
  align-items: center;
  flex: none;
  width: 354px;
  padding: 0 0 0 6px;
  gap: 2px;
  background: ${(p) => (p.$selected ? "#007acc" : "#252526")};
  border-right: 1px solid #3f3f46;
  border-bottom: 1px solid #3f3f46;
  white-space: nowrap;
`;

const CellText = styled.span`
  padding-top: 2px;
`;

const NameIcon = styled.span`
  flex: none;
  background: ${(p) => (p.$selected ? "#2d2d30" : "transparent")};
`;

const SchemaCell = styled.div`
  display: flex;
  align-items: center;
  flex: 1;
  padding: 0 0 0 4px;
  background: ${(p) => (p.$selected ? "#007acc" : "#252526")};
  border-bottom: 1px solid #3f3f46;
`;

const GroupRow = styled.div`
  display: flex;
  align-items: center;
  height: 24px;
  padding-left: 30px;
  border-bottom: 1px solid #3f3f46;
  background: #2d2d30;
`;

const Expander = styled.span`
  flex: none;
  width: 7px;
  height: 7px;
  margin-right: 10px;
  background: #e8e8e8;
  clip-path: polygon(100% 0, 100% 100%, 0 100%);
`;

const GroupIcon = styled.span`
  flex: none;
  margin: 0 3px 0 11px;
`;

const GroupTitle = styled.span`
  color: #2f8fe8;
  font-weight: 700;
  font-size: 11.5px;
  letter-spacing: 0;
`;

const StatusBar = styled.footer`
  display: flex;
  align-items: center;
  flex: none;
  height: 25px;
  padding: 0 3px 0 14px;
  background: #007acc;
  color: #f1f1f1;
  letter-spacing: -0.15px;
`;

const StatusText = styled.span`
  margin-left: ${(p) => p.$gap}px;
  white-space: nowrap;
`;

const StatusItem = styled.div`
  display: flex;
  align-items: center;
  margin-left: 12px;
`;

const StatusRight = styled.div`
  display: flex;
  align-items: center;
  margin-left: auto;
`;

const Grip = styled.span`
  width: 10px;
  height: 10px;
  margin: 6px 0 0 22px;
  background-image: radial-gradient(#cfe6f7 0.8px, transparent 1px);
  background-size: 3px 3px;
  clip-path: polygon(100% 0, 100% 100%, 0 100%);
`;

const Dialog = styled.div`
  position: absolute;
  left: 892px;
  top: 204px;
  display: flex;
  flex-direction: column;
  width: 573px;
  height: 494px;
  padding: 0 5px 5px;
  border: 1px solid #007acc;
  background: #2d2d30;
`;

const DialogHead = styled.div`
  display: flex;
  align-items: center;
  justify-content: space-between;
  flex: none;
  height: 38px;
  padding: 0 15px 0 2px;
`;

const DialogTitle = styled.div`
  font-size: 14px;
  letter-spacing: -0.25px;
`;

const DialogTools = styled.div`
  display: flex;
  align-items: center;
  gap: 29px;
`;

const DialogBody = styled.div`
  display: flex;
  flex-direction: column;
  flex: 1;
  min-height: 0;
  padding: 15px 11px 0 12px;
  border: 1px solid #3f3f46;
`;

const Heading = styled.h2`
  flex: none;
  margin: 0 0 0 3px;
  font-size: 15px;
  font-weight: 400;
  line-height: 22px;
  letter-spacing: -0.3px;
`;

const IncludeRow = styled.div`
  display: flex;
  align-items: center;
  flex: none;
  height: 22px;
  margin-top: 6px;
  padding-left: 19px;
`;

const IncludeLabel = styled.span`
  margin-left: 8px;
  color: #e0e0e0;
`;

const ToolGroup = styled.div`
  display: flex;
  gap: 10px;
  margin-left: auto;
`;

const ToolButton = styled.div`
  display: flex;
  align-items: center;
  justify-content: center;
  width: 22px;
  height: 22px;
  border: 1px solid #3f3f46;
  background: #252526;
`;

const DepList = styled.div`
  display: flex;
  flex: none;
  height: 306px;
  margin-top: 11px;
  overflow: hidden;
  border-bottom: 1px solid #3f3f46;
`;

const DepRows = styled.div`
  flex: 1;
  min-width: 0;
  overflow: hidden;
`;

const DepRoot = styled.div`
  display: flex;
  align-items: center;
  height: 23px;
  padding-left: 8px;
  background: #007acc;
  font-size: 12px;
  font-weight: 700;
  letter-spacing: 0.4px;
`;

const DepRootIcon = styled.span`
  flex: none;
  margin: 0 3px 0 12px;
`;

const DepExpander = styled(Expander)`
  visibility: ${(p) => (p.$hidden ? "hidden" : "visible")};
  width: 6px;
  height: 6px;
  margin-right: 11px;
`;

const DepRow = styled.div`
  display: flex;
  align-items: center;
  height: 19px;
  padding: 0 0 0 6px;
  background: #252526;
  border-bottom: 1px solid #3f3f46;
  white-space: nowrap;
`;

const DepIcon = styled.span`
  flex: none;
  margin: 0 2px 0 14px;
`;

const DepDetail = styled.div`
  padding: ${(p) => (p.$tight ? "1px" : "8px")} 8px 7px 26px;
  border-bottom: 1px solid #3f3f46;
`;

const DependsLine = styled.div`
  display: flex;
  align-items: center;
  height: 20px;
  padding: 0 0 0 2px;
  background: #252526;
  border: 1px solid #3f3f46;

  & + & {
    border-top: 0;
  }
`;

const DependsLabel = styled.span`
  width: 73px;
  padding-top: 2px;
  letter-spacing: -0.1px;
`;

const DependsTarget = styled.span`
  margin-left: 2px;
  padding-top: 2px;
`;

const DepCount = styled.div`
  flex: none;
  margin-top: 10px;
  line-height: 16px;
  margin-left: -1px;
  color: #e8e8e8;
  letter-spacing: -0.15px;
`;

const WizardButtons = styled.div`
  display: flex;
  justify-content: flex-end;
  gap: 9px;
  margin-top: 4px;
`;

const WizardButton = styled.div`
  display: flex;
  align-items: center;
  justify-content: center;
  width: 75px;
  height: 25px;
  border: 1px solid #3f3f46;
  background: #252526;
`;
